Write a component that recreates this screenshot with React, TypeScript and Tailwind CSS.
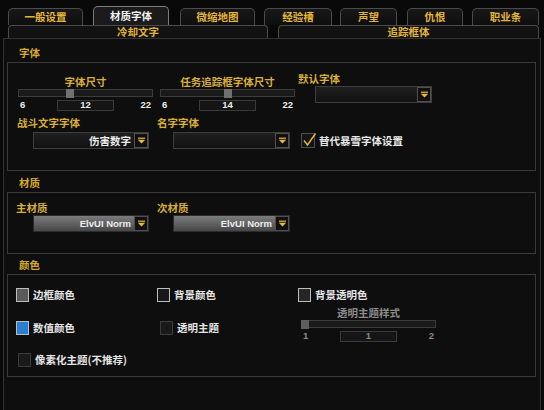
import React from "react"

interface Tab {
  label: string
  cls: string
  active?: boolean
}

const tabs: Tab[] = [
  { label: "一般设置", cls: "ml-[8px] w-[75px]" },
  { label: "材质字体", cls: "ml-[10px] w-[76px]", active: true },
  { label: "微缩地图", cls: "ml-[11px] w-[75px]" },
  { label: "经验槽", cls: "ml-[9px] w-[68px]" },
  { label: "声望", cls: "ml-[8px] w-[57px]" },
  { label: "仇恨", cls: "ml-[10px] w-[56px]" },
  { label: "职业条", cls: "ml-[9px] w-[67px]" },
]

function Arrow() {
  return (
    <svg width="9" height="7" viewBox="0 0 9 7">
      <path d="M1 1.2h7" stroke="#e6b93a" strokeWidth="1.2" />
      <path d="M0.8 2.8h7.4L4.5 6.4z" fill="#e6b93a" />
    </svg>
  )
}

function Dropdown({ width, text, texture }: { width: string; text?: string; texture?: boolean }) {
  return (
    <div
      className={`flex h-[17px] items-center border ${
        texture
          ? "border-[#2c2c2c] bg-linear-to-b from-[#7c7c7c] to-[#474747]"
          : "border-[#3e3e3e] bg-linear-to-b from-[#1f1f1f] to-[#121212]"
      } ${width}`}
    >
      <span
        className={`flex-1 whitespace-nowrap pr-[3px] text-right font-bold text-[#ededed] ${
          texture ? "font-['Liberation_Sans',sans-serif] text-[9.5px]" : "text-[10.5px]"
        } leading-[15px]`}
      >
        {text}
      </span>
      <div className="flex h-[15px] w-[14px] shrink-0 items-center justify-center border border-[#505050] bg-[#101010]">
        <Arrow />
      </div>
    </div>
  )
}

function Slider({
  label,
  value,
  min,
  max,
  dim,
}: {
  label: string
  value: number
  min: number
  max: number
  dim?: boolean
}) {
  const pct = (value - min) / (max - min)
  return (
    <div className="flex w-[135px] flex-col">
      <div
        className={`h-[12px] text-center text-[10.5px] leading-[12px] font-bold ${
          dim ? "text-[#8a8a8a]" : "text-[#d9ae38]"
        }`}
      >
        {label}
      </div>
      <div className="relative mt-[1px] h-[8px] border border-[#3c3c3c] bg-[#1a1a1a]">
        <div
          className={`absolute top-[-1px] h-[9px] w-[8px] ${dim ? "bg-[#5e5e5e]" : "bg-[#707070]"}`}
          style={{ left: `${pct * 127 - 1}px` }}
        />
      </div>
      <div
        className={`mt-[2px] flex h-[12px] items-center justify-between px-[2px] font-['Liberation_Sans',sans-serif] text-[9.5px] font-bold ${
          dim ? "text-[#8a8a8a]" : "text-[#ececec]"
        }`}
      >
        <span className="w-[14px]">{min}</span>
        <div className="flex h-[11px] w-[57px] items-center justify-center border border-[#3a3a3a] bg-[#151515]">
          {value}
        </div>
        <span className="w-[14px] text-right">{max}</span>
      </div>
    </div>
  )
}

function Swatch({ fill, label }: { fill: string; label: string }) {
  return (
    <div className="flex h-[14px] items-center">
      <div className={`h-[14px] w-[13px] border border-[#bdbdbd] ${fill}`} />
      <span className="ml-[4px] text-[10.5px] leading-[12px] font-bold text-[#e4e4e4]">{label}</span>
    </div>
  )
}

function Check({ label, cls }: { label: string; cls?: string }) {
  return (
    <div className={`flex h-[14px] items-center ${cls ?? ""}`}>
      <div className="h-[14px] w-[13px] border border-[#3c3c3c] bg-[#1a1a1a]" />
      <span className="ml-[4px] text-[10.5px] leading-[12px] font-bold text-[#e4e4e4]">{label}</span>
    </div>
  )
}

function Header({ text, cls }: { text: string; cls: string }) {
  return (
    <div className={`pl-[15px] text-[10.5px] leading-[12px] font-bold text-[#d6a92e] ${cls}`}>{text}</div>
  )
}

export default function App() {
  return (
    <div className="h-[410px] w-[544px] overflow-hidden bg-[#090909] font-['Noto_Sans_CJK_SC',sans-serif]">
      {/* Top tabs */}
      <div className="flex h-[25px] items-end">
        {tabs.map((t) => (
          <div
            key={t.label}
            className={`flex items-center justify-center rounded-t-[5px] border border-b-0 text-[10.5px] font-bold ${
              t.active
                ? "h-[19px] border-[#7a7a7a] bg-[#1b1b1b] text-[#f2f2f2]"
                : "h-[17px] border-[#4b4b4b] bg-linear-to-b from-[#181818] to-[#0e0e0e] text-[#e2b53a]"
            } ${t.cls}`}
          >
            {t.label}
          </div>
        ))}
      </div>
      <div className="flex h-[13px]">
        <div className="ml-[8px] flex w-[260px] items-center justify-center rounded-t-[4px] border border-b-0 border-[#4b4b4b] bg-[#121212] text-[10.5px] leading-[12px] font-bold text-[#e2b53a]">
          冷却文字
        </div>
        <div className="ml-[10px] flex w-[261px] items-center justify-center rounded-t-[4px] border border-b-0 border-[#4b4b4b] bg-[#121212] text-[10.5px] leading-[12px] font-bold text-[#e2b53a]">
          追踪框体
        </div>
      </div>

      {/* Main panel */}
      <div className="mx-[3px] h-[372px] border border-b-0 border-[#333333] bg-[#0e0e0e]">
        <Header text="字体" cls="h-[23px] pt-[8px]" />
        <div className="ml-[3px] h-[109px] w-[529px] border border-[#3a3a3a] pt-[10px]">
          <div className="flex">
            <div className="ml-[10px] pt-[3px]">
              <Slider label="字体尺寸" value={12} min={6} max={22} />
            </div>
            <div className="ml-[7px] pt-[3px]">
              <Slider label="任务追踪框字体尺寸" value={14} min={6} max={22} />
            </div>
            <div className="ml-[3px] flex flex-col">
              <div className="h-[12px] text-[10.5px] leading-[12px] font-bold text-[#d9ae38]">默认字体</div>
              <div className="mt-[1px] ml-[17px]">
                <Dropdown width="w-[117px]" />
              </div>
            </div>
          </div>
          <div className="mt-[6px] flex">
            <div className="ml-[9px] flex w-[140px] flex-col">
              <div className="h-[12px] text-[10.5px] leading-[12px] font-bold text-[#d9ae38]">战斗文字字体</div>
              <div className="mt-[3px] ml-[16px]">
                <Dropdown width="w-[116px]" text="伤害数字" />
              </div>
            </div>
            <div className="flex w-[144px] flex-col">
              <div className="h-[12px] text-[10.5px] leading-[12px] font-bold text-[#d9ae38]">名字字体</div>
              <div className="mt-[3px] ml-[16px]">
                <Dropdown width="w-[117px]" />
              </div>
            </div>
            <div className="flex flex-col">
              <div className="h-[12px]" />
              <div className="mt-[4px] flex h-[15px] items-center">
                <div className="relative h-[15px] w-[14px] border border-[#4e4e4e] bg-[#141414]">
                  <svg className="absolute top-[-2px] left-[0px]" width="15" height="16" viewBox="0 0 15 16">
                    <path d="M2 8.5l3.5 4.5L13.5 1.5" fill="none" stroke="#e3b53a" strokeWidth="1.5" />
                  </svg>
                </div>
                <span className="ml-[4px] text-[10.5px] leading-[12px] font-bold text-[#e8e8e8]">替代暴雪字体设置</span>
              </div>
            </div>
          </div>
        </div>

        <Header text="材质" cls="h-[21px] pt-[6px]" />
        <div className="ml-[3px] flex h-[62px] w-[529px] border border-[#3a3a3a] pt-[9px]">
          <div className="ml-[8px] flex w-[141px] flex-col">
            <div className="h-[12px] text-[10.5px] leading-[12px] font-bold text-[#d9ae38]">主材质</div>
            <div className="mt-[1px] ml-[17px]">
              <Dropdown width="w-[116px]" text="ElvUI Norm" texture />
            </div>
          </div>
          <div className="flex flex-col">
            <div className="h-[12px] text-[10.5px] leading-[12px] font-bold text-[#d9ae38]">次材质</div>
            <div className="mt-[1px] ml-[16px]">
              <Dropdown width="w-[117px]" text="ElvUI Norm" texture />
            </div>
          </div>
        </div>

        <Header text="颜色" cls="h-[20px] pt-[5px]" />
        <div className="ml-[3px] flex h-[103px] w-[529px] border border-[#3a3a3a] pt-[13px]">
          <div className="ml-[8px] flex w-[141px] flex-col">
            <Swatch fill="bg-[#5a5a5a]" label="边框颜色" />
            <div className="mt-[19px]">
              <Swatch fill="bg-[#2a7fd4]" label="数值颜色" />
            </div>
            <div className="mt-[18px]">
              <Check label="像素化主题(不推荐)" cls="ml-[2px]" />
            </div>
          </div>
          <div className="flex w-[141px] flex-col">
            <Swatch fill="bg-[#181818]" label="背景颜色" />
            <div className="mt-[19px]">
              <Check label="透明主题" cls="ml-[3px]" />
            </div>
          </div>
          <div className="flex flex-col">
            <Swatch fill="bg-[#262626]" label="背景透明色" />
            <div className="mt-[5px] ml-[3px]">
              <Slider label="透明主题样式" value={1} min={1} max={2} dim />
            </div>
          </div>
        </div>
      </div>
    </div>
  )
}
